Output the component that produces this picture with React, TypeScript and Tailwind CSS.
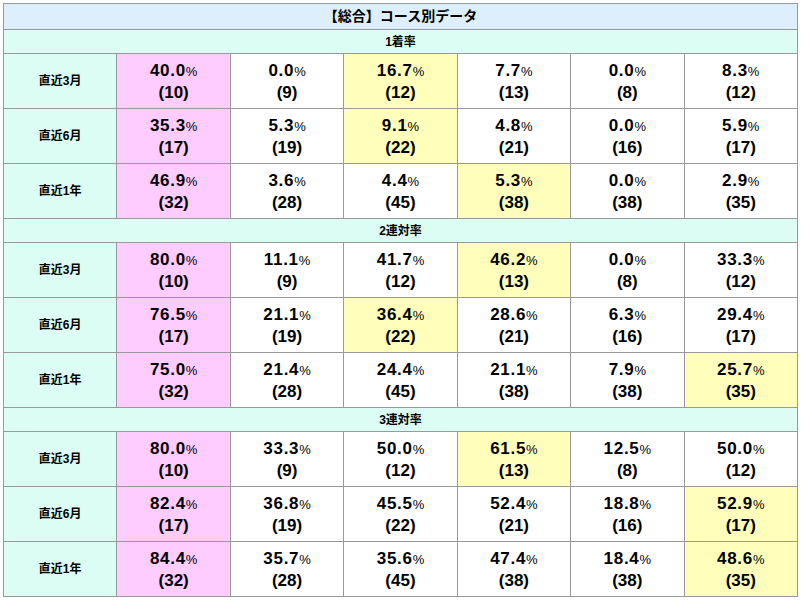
type Cell = { rate: string; count: string; mark?: "top" | "second" };

type Section = { title: string; rows: { label: string; cells: Cell[] }[] };

const c = (rate: string, count: string, mark?: "top" | "second"): Cell => ({ rate, count, mark });

const sections: Section[] = [
  {
    title: "1着率",
    rows: [
      { label: "直近3月", cells: [c("40.0", "10", "top"), c("0.0", "9"), c("16.7", "12", "second"), c("7.7", "13"), c("0.0", "8"), c("8.3", "12")] },
      { label: "直近6月", cells: [c("35.3", "17", "top"), c("5.3", "19"), c("9.1", "22", "second"), c("4.8", "21"), c("0.0", "16"), c("5.9", "17")] },
      { label: "直近1年", cells: [c("46.9", "32", "top"), c("3.6", "28"), c("4.4", "45"), c("5.3", "38", "second"), c("0.0", "38"), c("2.9", "35")] },
    ],
  },
  {
    title: "2連対率",
    rows: [
      { label: "直近3月", cells: [c("80.0", "10", "top"), c("11.1", "9"), c("41.7", "12"), c("46.2", "13", "second"), c("0.0", "8"), c("33.3", "12")] },
      { label: "直近6月", cells: [c("76.5", "17", "top"), c("21.1", "19"), c("36.4", "22", "second"), c("28.6", "21"), c("6.3", "16"), c("29.4", "17")] },
      { label: "直近1年", cells: [c("75.0", "32", "top"), c("21.4", "28"), c("24.4", "45"), c("21.1", "38"), c("7.9", "38"), c("25.7", "35", "second")] },
    ],
  },
  {
    title: "3連対率",
    rows: [
      { label: "直近3月", cells: [c("80.0", "10", "top"), c("33.3", "9"), c("50.0", "12"), c("61.5", "13", "second"), c("12.5", "8"), c("50.0", "12")] },
      { label: "直近6月", cells: [c("82.4", "17", "top"), c("36.8", "19"), c("45.5", "22"), c("52.4", "21"), c("18.8", "16"), c("52.9", "17", "second")] },
      { label: "直近1年", cells: [c("84.4", "32", "top"), c("35.7", "28"), c("35.6", "45"), c("47.4", "38"), c("18.4", "38"), c("48.6", "35", "second")] },
    ],
  },
];

const font = { fontFamily: '"Liberation Sans", "Noto Sans CJK JP", sans-serif' };

export default function App() {
  return (
    <div className="bg-white pl-[3px] pt-[3px] text-black" style={font}>
      <table className="w-[795px] table-fixed border-collapse">
        <tbody>
          <tr className="h-[26px]">
            <th colSpan={7} className="border border-[#999] bg-[#ddeefc] p-0 text-center text-[14px] font-bold">
              【総合】コース別データ
            </th>
          </tr>
          {sections.map((section) => (
            <SectionRows key={section.title} section={section} />
          ))}
        </tbody>
      </table>
    </div>
  );
}

function SectionRows({ section }: { section: Section }) {
  return (
    <>
      <tr className="h-[24px]">
        <th colSpan={7} className="border border-[#999] bg-[#dcfdf3] p-0 text-center text-[12px] font-bold">
          {section.title}
        </th>
      </tr>
      {section.rows.map((row) => (
        <tr key={row.label} className="h-[55px]">
          <th className="border border-[#999] bg-[#dcfdf3] p-0 text-center text-[12px] font-bold">{row.label}</th>
          {row.cells.map((cell, i) => (
            <td
              key={i}
              className={`border border-[#999] p-0 text-center leading-[21px] ${
                cell.mark === "top" ? "bg-[#ffccff]" : cell.mark === "second" ? "bg-[#ffffbb]" : "bg-white"
              }`}
            >
              <div className="text-[17px] font-bold tracking-[0.7px]">
                {cell.rate}
                <span className="text-[13px] font-normal tracking-normal">%</span>
              </div>
              <div className="text-[17px] font-bold">({cell.count})</div>
            </td>
          ))}
        </tr>
      ))}
    </>
  );
}
